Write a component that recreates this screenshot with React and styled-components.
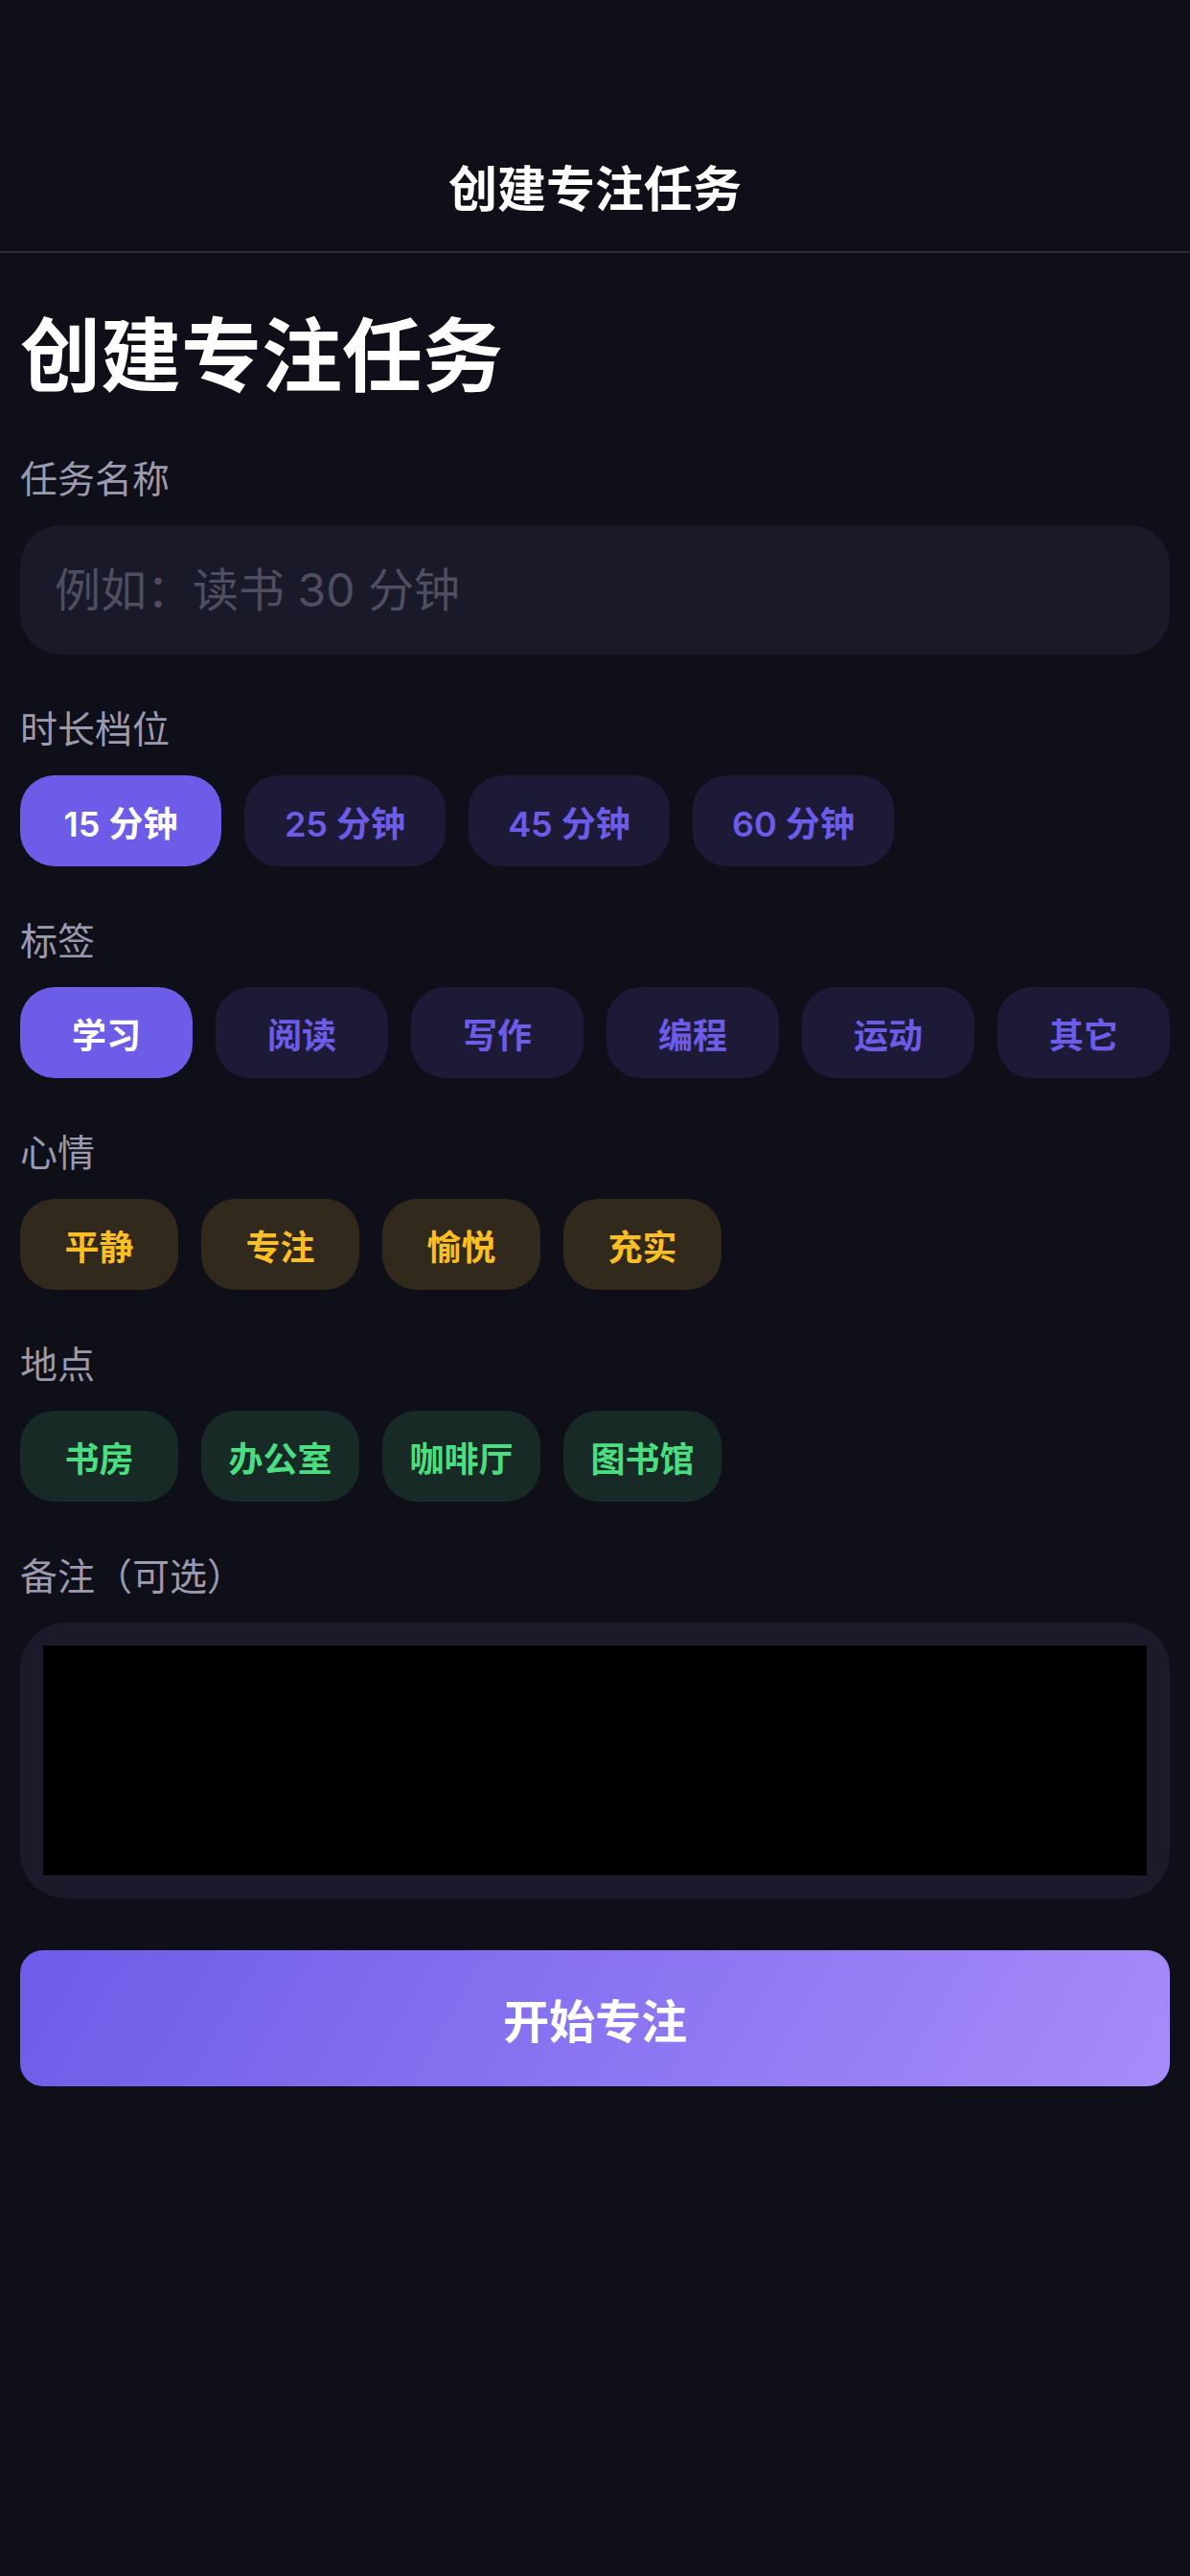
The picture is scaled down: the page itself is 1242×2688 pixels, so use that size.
import React, { useState } from 'react'
import styled, { createGlobalStyle } from 'styled-components'

const GlobalStyle = createGlobalStyle`
  * { box-sizing: border-box; }
  html, body {
    margin: 0;
    padding: 0;
    background: #0f0f19;
  }
  body {
    font-family: Inter, "Noto Sans CJK SC", "Noto Sans", sans-serif;
    color: #ffffff;
  }
`

const DURATIONS = [15, 25, 45, 60]
const TAGS = ['学习', '阅读', '写作', '编程', '运动', '其它']
const MOODS = ['平静', '专注', '愉悦', '充实']
const PLACES = ['书房', '办公室', '咖啡厅', '图书馆']

const TONES = {
  purple: { bg: '#1d1a38', fg: '#6c5ce7' },
  amber: { bg: '#31291c', fg: '#fbbf24' },
  green: { bg: '#172a26', fg: '#4ade80' },
}

function App() {
  const [duration, setDuration] = useState(15)
  const [tag, setTag] = useState('学习')
  const [mood, setMood] = useState(null)
  const [place, setPlace] = useState(null)

  return (
    <Page>
      <GlobalStyle />
      <NavBar>
        <NavTitle>创建专注任务</NavTitle>
      </NavBar>

      <Content>
        <Heading>创建专注任务</Heading>

        <Section>
          <Label>任务名称</Label>
          <TextInput placeholder="例如：读书 30 分钟" />
        </Section>

        <Section>
          <Label>时长档位</Label>
          <ChipRow>
            {DURATIONS.map((d) => (
              <Chip
                key={d}
                $tone="purple"
                $active={duration === d}
                $width={210}
                onClick={() => setDuration(d)}
              >
                {d} 分钟
              </Chip>
            ))}
          </ChipRow>
        </Section>

        <Section>
          <Label>标签</Label>
          <ChipRow>
            {TAGS.map((t) => (
              <Chip
                key={t}
                $tone="purple"
                $active={tag === t}
                $fill
                onClick={() => setTag(t)}
              >
                {t}
              </Chip>
            ))}
          </ChipRow>
        </Section>

        <Section>
          <Label>心情</Label>
          <ChipRow>
            {MOODS.map((m) => (
              <Chip
                key={m}
                $tone="amber"
                $active={mood === m}
                $width={165}
                onClick={() => setMood(m)}
              >
                {m}
              </Chip>
            ))}
          </ChipRow>
        </Section>

        <Section>
          <Label>地点</Label>
          <ChipRow>
            {PLACES.map((p) => (
              <Chip
                key={p}
                $tone="green"
                $active={place === p}
                $width={165}
                onClick={() => setPlace(p)}
              >
                {p}
              </Chip>
            ))}
          </ChipRow>
        </Section>

        <Section>
          <Label>备注（可选）</Label>
          <NoteBox>
            <NoteArea />
          </NoteBox>
        </Section>

        <StartButton>开始专注</StartButton>
      </Content>
    </Page>
  )
}

export default App

const Page = styled.div`
  width: 1242px;
  min-height: 2688px;
  background: #0f0f19;
`

const NavBar = styled.header`
  height: 264px;
  padding-top: 132px;
  display: flex;
  align-items: center;
  justify-content: center;
  border-bottom: 2px solid #2b2b39;
`

const NavTitle = styled.h1`
  margin: 0;
  font-size: 51px;
  line-height: 1;
  font-weight: 600;
  color: #ffffff;
`

const Content = styled.main`
  padding: 58px 21px 0;
  display: flex;
  flex-direction: column;
  gap: 54px;
`

const Heading = styled.h2`
  margin: 0;
  font-size: 84px;
  line-height: 100px;
  font-weight: 700;
  color: #ffffff;
`

const Section = styled.section`
  display: flex;
  flex-direction: column;
  gap: 24px;
`

const Label = styled.div`
  font-size: 39px;
  line-height: 48px;
  color: #9c9aae;
`

const TextInput = styled.input`
  height: 135px;
  width: 100%;
  padding: 0 36px;
  border: none;
  outline: none;
  border-radius: 42px;
  background: #191929;
  color: #ffffff;
  font-family: inherit;
  font-size: 48px;

  &::placeholder {
    color: #4f4e60;
  }
`

const ChipRow = styled.div`
  display: flex;
  gap: 24px;
`

const Chip = styled.button`
  height: 95px;
  flex: ${(p) => (p.$fill ? '1 1 0' : '0 0 auto')};
  width: ${(p) => (p.$width ? `${p.$width}px` : 'auto')};
  padding: 0;
  border: none;
  border-radius: 36px;
  display: flex;
  align-items: center;
  justify-content: center;
  font-family: inherit;
  font-size: 36px;
  font-weight: 600;
  white-space: nowrap;
  cursor: pointer;
  background: ${(p) => (p.$active ? '#6c5ce7' : TONES[p.$tone].bg)};
  color: ${(p) => (p.$active ? '#ffffff' : TONES[p.$tone].fg)};
`

const NoteBox = styled.div`
  padding: 24px;
  border-radius: 48px;
  background: #1a1a2a;
`

const NoteArea = styled.textarea`
  display: block;
  width: 100%;
  height: 240px;
  border: none;
  outline: none;
  resize: none;
  background: #000000;
  color: #ffffff;
  font-family: inherit;
  font-size: 42px;
`

const StartButton = styled.button`
  height: 142px;
  width: 100%;
  border: none;
  border-radius: 24px;
  background: linear-gradient(120deg, #6c5ce7 0%, #a78bfa 100%);
  color: #ffffff;
  font-family: inherit;
  font-size: 48px;
  font-weight: 700;
  cursor: pointer;
`
